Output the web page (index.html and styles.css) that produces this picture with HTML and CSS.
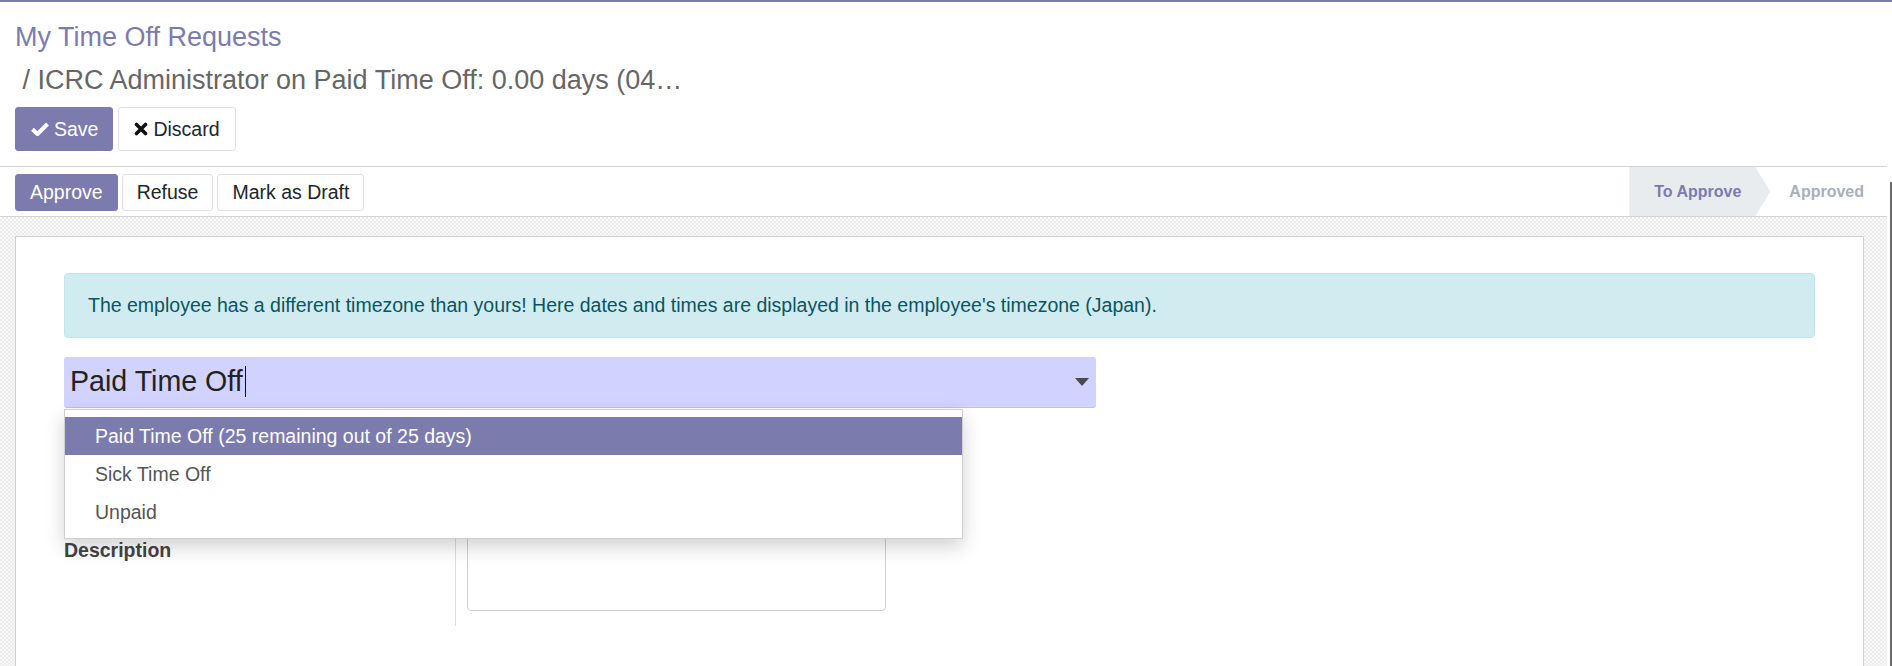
FILE: index.html
```html
<!DOCTYPE html>
<html lang="en">
<head>
<meta charset="utf-8">
<title>My Time Off Requests</title>
<link rel="stylesheet" href="styles.css">
</head>
<body>
<div class="page">
  <div class="main">
    <header class="control-panel">
      <ol class="breadcrumb">
        <li class="crumb-link">My Time Off Requests</li>
        <li class="crumb-active">&nbsp;/ ICRC Administrator on Paid Time Off: 0.00 days (04…</li>
      </ol>
      <div class="cp-buttons">
        <button class="btn btn-primary btn-lg">
          <svg class="ico-check" width="18" height="14" viewBox="0 0 18 14"><path d="M1.5 7.2 L6.5 12 L16.5 2" fill="none" stroke="#fff" stroke-width="4" stroke-linejoin="round"/></svg>
          Save
        </button>
        <button class="btn btn-secondary btn-lg">
          <svg class="ico-times" width="14" height="14" viewBox="0 0 14 14"><path d="M2.5 2.5 L11.5 11.5 M11.5 2.5 L2.5 11.5" fill="none" stroke="#111" stroke-width="3.6" stroke-linecap="round"/></svg>
          Discard
        </button>
      </div>
    </header>

    <div class="statusbar">
      <div class="sb-buttons">
        <button class="btn btn-primary">Approve</button>
        <button class="btn btn-secondary">Refuse</button>
        <button class="btn btn-secondary">Mark as Draft</button>
      </div>
      <div class="sb-status">
        <span class="st st-current">To Approve</span>
        <span class="st st-next">Approved</span>
      </div>
    </div>

    <div class="sheet-bg">
      <div class="sheet">
        <div class="alert">The employee has a different timezone than yours! Here dates and times are displayed in the employee's timezone (Japan).</div>

        <div class="select-wrap">
          <div class="select">
            <span class="select-value">Paid Time Off</span><span class="caret"></span>
            <span class="select-arrow"></span>
          </div>
          <ul class="menu">
            <li class="menu-item active">Paid Time Off (25 remaining out of 25 days)</li>
            <li class="menu-item">Sick Time Off</li>
            <li class="menu-item">Unpaid</li>
          </ul>
        </div>

        <div class="group">
          <div class="label-col"><label class="field-label">Description</label></div>
          <div class="field-col"><div class="textarea"></div></div>
        </div>
      </div>
    </div>
  </div>
  <div class="edge"><div class="edge-line"></div></div>
</div>
</body>
</html>
```

FILE: styles.css
```css
* { box-sizing: border-box; }

html, body {
  margin: 0;
  padding: 0;
  height: 666px;
  overflow: hidden;
  background: #fff;
  font-family: "Liberation Sans", Arial, sans-serif;
  font-size: 19.5px;
  color: #4c4c4c;
}

.page {
  display: flex;
  width: 1892px;
  height: 666px;
  border-top: 2px solid #7c7bad;
}

.main {
  width: 1887px;
  display: flex;
  flex-direction: column;
}

.edge {
  width: 5px;
  display: flex;
  justify-content: flex-end;
  padding-top: 180px;
}
.edge-line {
  width: 2px;
  background: #6a6a6a;
}

/* ---------- control panel ---------- */
.control-panel {
  padding: 19px 15px 15px;
  border-bottom: 1px solid #d4d4d4;
}

.breadcrumb {
  list-style: none;
  margin: 0;
  padding: 0;
  font-size: 27px;
  line-height: 32px;
}
.crumb-link { color: #7c7bad; }
.crumb-active { color: #666; margin-top: 11px; white-space: nowrap; }

.cp-buttons {
  display: flex;
  gap: 5px;
  margin-top: 11px;
}

.btn {
  font-family: inherit;
  font-size: 19.5px;
  line-height: 29px;
  padding: 3px 14px;
  border: 1px solid #dee2e6;
  border-radius: 3px;
  background: #fff;
  color: #212529;
  display: inline-flex;
  align-items: center;
  gap: 5px;
  cursor: pointer;
}
.btn-lg {
  line-height: 28px;
  padding: 7px 14px;
}
.btn-primary {
  background: #7c7bad;
  border-color: #7c7bad;
  color: #fff;
}
.btn-lg.btn-primary { padding-left: 15px; padding-right: 14px; }
.btn-lg.btn-secondary { padding-left: 15px; padding-right: 15px; }

/* ---------- status bar ---------- */
.statusbar {
  display: flex;
  justify-content: space-between;
  height: 50px;
  border-bottom: 1px solid #d4d4d4;
}
.sb-buttons {
  display: flex;
  gap: 4px;
  padding: 7px 0 0 15px;
  align-items: flex-start;
}
.sb-status {
  display: flex;
  height: 49px;
}
.st {
  display: flex;
  align-items: center;
  font-size: 16px;
  font-weight: bold;
}
.st-current {
  background: #e9ecef;
  color: #7c7bad;
  padding: 0 29px 0 25px;
  clip-path: polygon(0 0, calc(100% - 15px) 0, 100% 50%, calc(100% - 15px) 100%, 0 100%);
}
.st-next {
  color: #a9afba;
  padding: 0 23px 0 19px;
}

/* ---------- sheet ---------- */
.sheet-bg {
  flex: 1;
  padding: 19px 23px 0 15px;
  background-color: #f3f3f3;
  background-image: repeating-conic-gradient(#ececec 0 25%, #f8f8f8 0 50%);
  background-size: 4px 4px;
}
.sheet {
  background: #fff;
  border: 1px solid #cfcfd8;
  min-height: 600px;
  padding: 36px 48px;
}

.alert {
  background: #d1ecf1;
  border: 1px solid #bee5eb;
  border-radius: 4px;
  color: #0c5460;
  padding: 17px 23px;
  line-height: 29px;
  margin-bottom: 19px;
}

.select-wrap {
  position: relative;
  width: 1032px;
}
.select {
  display: flex;
  align-items: center;
  height: 51px;
  padding: 0 7px 1px 6px;
  background: #d2d2ff;
  border-bottom: 1px solid #c3c3d3;
  border-radius: 3px;
  font-size: 28.6px;
  color: #222;
}
.caret {
  display: inline-block;
  width: 1px;
  height: 31px;
  background: #111;
  margin-left: 2px;
}
.select-arrow {
  margin-left: auto;
  width: 0;
  height: 0;
  border-left: 7px solid transparent;
  border-right: 7px solid transparent;
  border-top: 8px solid #4a4a4a;
}

.menu {
  position: absolute;
  top: 52px;
  left: 0;
  width: 899px;
  margin: 0;
  padding: 7px 0;
  list-style: none;
  background: #fff;
  border: 1px solid #cfcfcf;
  box-shadow: 0 8px 18px rgba(0, 0, 0, 0.18);
  z-index: 10;
}
.menu-item {
  height: 38px;
  line-height: 38px;
  padding-left: 30px;
  color: #555;
}
.menu-item.active {
  background: #7c7bad;
  color: #fff;
}

.group {
  display: grid;
  grid-template-columns: 391px 1fr;
  margin-top: 12px;
}
.label-col {
  padding-top: 116px;
}
.field-label {
  font-weight: bold;
  color: #444;
  line-height: 29px;
}
.field-col {
  border-left: 1px solid #dcdcdc;
  padding: 116px 0 15px 11px;
}
.textarea {
  width: 419px;
  height: 75px;
  border: 1px solid #cfcfcf;
  border-radius: 4px;
}
```
